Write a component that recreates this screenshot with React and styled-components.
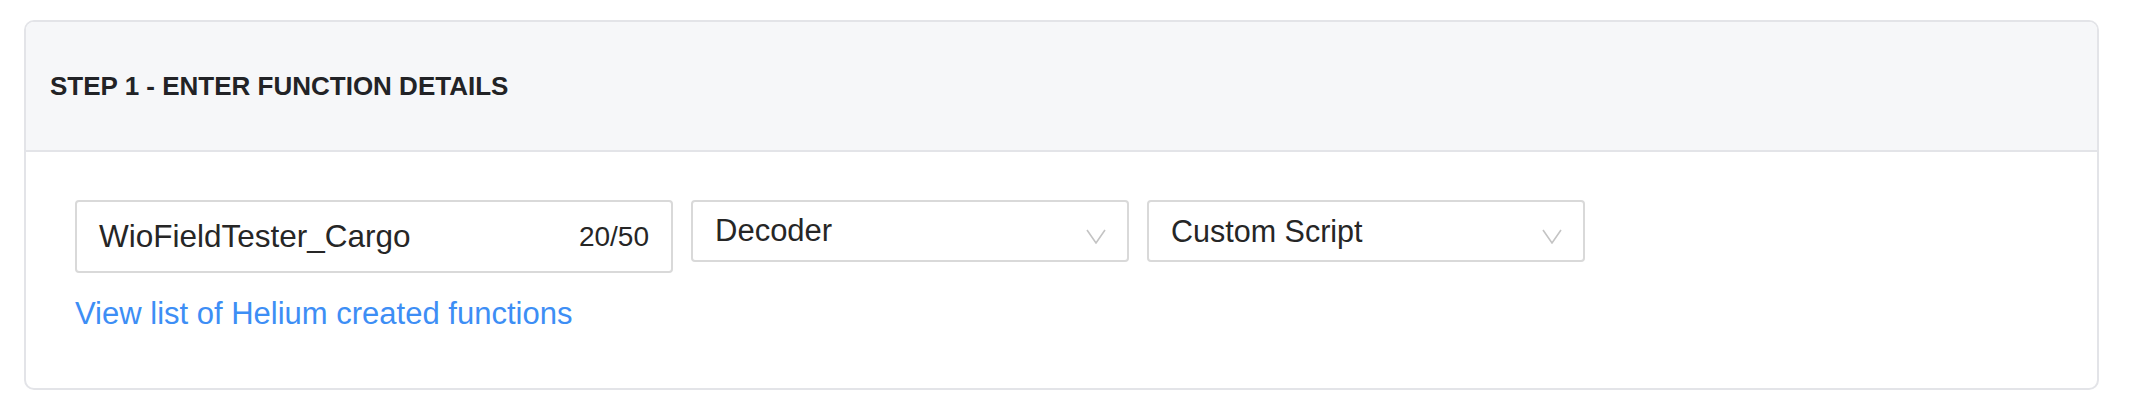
import styled, { createGlobalStyle } from "styled-components";

const GlobalStyle = createGlobalStyle`
  html, body {
    margin: 0;
    padding: 0;
    background: #ffffff;
    font-family: "Liberation Sans", Arial, sans-serif;
  }
  * {
    box-sizing: border-box;
  }
`;

const Page = styled.div`
  padding: 20px 43px 0 24px;
`;

const Card = styled.section`
  border: 2px solid #e3e4e8;
  border-radius: 10px;
  overflow: hidden;
  background: #ffffff;
`;

const CardHeader = styled.header`
  height: 130px;
  display: flex;
  align-items: center;
  padding: 0 24px;
  background: #f6f7f9;
  border-bottom: 2px solid #e3e4e8;
`;

const Title = styled.h2`
  margin: 0;
  font-size: 26px;
  font-weight: 700;
  color: #222326;
  letter-spacing: 0;
`;

const CardBody = styled.div`
  padding: 48px 0 55px 49px;
`;

const FieldRow = styled.div`
  display: flex;
  align-items: flex-start;
  gap: 18px;
`;

const NameInput = styled.div`
  width: 598px;
  height: 73px;
  display: flex;
  align-items: center;
  justify-content: space-between;
  padding: 0 22px;
  border: 2px solid #d9d9d9;
  border-radius: 4px;
  font-size: 31.5px;
  color: #262626;
`;

const Counter = styled.span`
  font-size: 28px;
  color: #262626;
`;

const Select = styled.div`
  width: 438px;
  height: 62px;
  display: flex;
  align-items: center;
  justify-content: space-between;
  padding: 0 21px 0 22px;
  border: 2px solid #d9d9d9;
  border-radius: 4px;
  font-size: ${(p) => p.size || 31}px;
  color: #262626;
`;

const Chevron = styled.svg`
  width: 20px;
  height: 15px;
  margin-top: 11px;
  flex-shrink: 0;
`;

const HelpLink = styled.a`
  display: inline-block;
  margin-top: 22px;
  font-size: 31px;
  line-height: 38px;
  color: #3d8ef5;
  text-decoration: none;
  cursor: pointer;
`;

const Arrow = () => (
  <Chevron viewBox="0 0 20 15">
    <polyline
      points="1,1 10,14 19,1"
      fill="none"
      stroke="#c4c4c4"
      strokeWidth="1.6"
    />
  </Chevron>
);

const App = () => {
  return (
    <Page>
      <GlobalStyle />
      <Card>
        <CardHeader>
          <Title>STEP 1 - ENTER FUNCTION DETAILS</Title>
        </CardHeader>
        <CardBody>
          <FieldRow>
            <NameInput>
              <span>WioFieldTester_Cargo</span>
              <Counter>20/50</Counter>
            </NameInput>
            <Select>
              <span>Decoder</span>
              <Arrow />
            </Select>
            <Select size={30.5}>
              <span>Custom Script</span>
              <Arrow />
            </Select>
          </FieldRow>
          <HelpLink>View list of Helium created functions</HelpLink>
        </CardBody>
      </Card>
    </Page>
  );
};

export default App;
